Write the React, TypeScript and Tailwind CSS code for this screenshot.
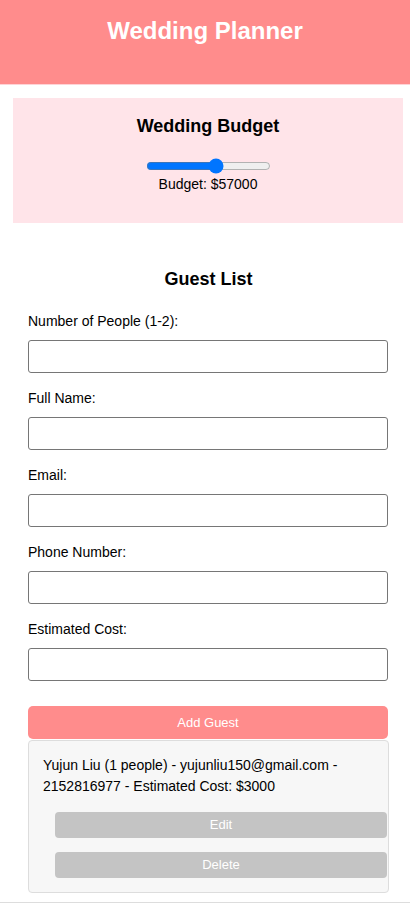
import { useState } from "react"

const fields = [
  "Number of People (1-2):",
  "Full Name:",
  "Email:",
  "Phone Number:",
  "Estimated Cost:",
]

export default function App() {
  const [budget, setBudget] = useState(57000)

  return (
    <div className="min-h-[904px] bg-white font-['Liberation_Sans',Arial,sans-serif] text-black">
      {/* Header */}
      <header className="h-[85px] border-b border-[#ffd3d6] bg-[#ff8c8c] pt-[17px]">
        <h1 className="text-center text-[24px] font-bold leading-[28px] text-white">
          Wedding Planner
        </h1>
      </header>

      {/* Budget */}
      <section className="ml-[13px] mt-[13px] h-[125px] w-[390px] bg-[#ffe4e9] pt-[17px] text-center">
        <h2 className="text-[18px] font-bold leading-[22px]">Wedding Budget</h2>
        <div className="mt-[21px] flex justify-center">
          <input
            type="range"
            min={0}
            max={100000}
            step={1000}
            value={budget}
            onChange={(e) => setBudget(Number(e.target.value))}
            className="m-0 h-4 w-[125px]"
          />
        </div>
        <p className="text-[14px] leading-[20px]">Budget: ${budget}</p>
      </section>

      {/* Guest list */}
      <section className="pl-[28px] pr-[21px] pt-[45px]">
        <h2 className="text-center text-[18px] font-bold leading-[22px]">Guest List</h2>
        <div className="mt-[21px] flex w-[360px] flex-col gap-[15px]">
          {fields.map((label) => (
            <label key={label} className="flex flex-col">
              <span className="text-[14px] leading-[20px]">{label}</span>
              <input
                type="text"
                className="mt-[9px] h-[33px] w-full rounded-[3px] border border-[#767676] bg-white px-2 text-[14px]"
              />
            </label>
          ))}
        </div>

        <button className="mt-[25px] h-[33px] w-[360px] rounded-[5px] bg-[#ff8c8c] text-[13px] text-white">
          Add Guest
        </button>

        <div className="mt-px w-[361px] rounded-[4px] border border-[#dddddd] bg-[#f7f7f7] pb-[14px] pl-[14px] pt-[14px]">
          <p className="text-[14px] leading-[21px]">
            Yujun Liu (1 people) - yujunliu150@gmail.com - 2152816977 - Estimated Cost: $3000
          </p>
          <div className="ml-[12px] mr-px mt-[15px] flex flex-col gap-[14px]">
            <button className="h-[26px] w-full rounded-[4px] bg-[#c4c4c4] text-[13px] text-white">
              Edit
            </button>
            <button className="h-[26px] w-full rounded-[4px] bg-[#c4c4c4] text-[13px] text-white">
              Delete
            </button>
          </div>
        </div>
      </section>

      <div className="mt-[9px] h-px bg-[#dddddd]" />
    </div>
  )
}
